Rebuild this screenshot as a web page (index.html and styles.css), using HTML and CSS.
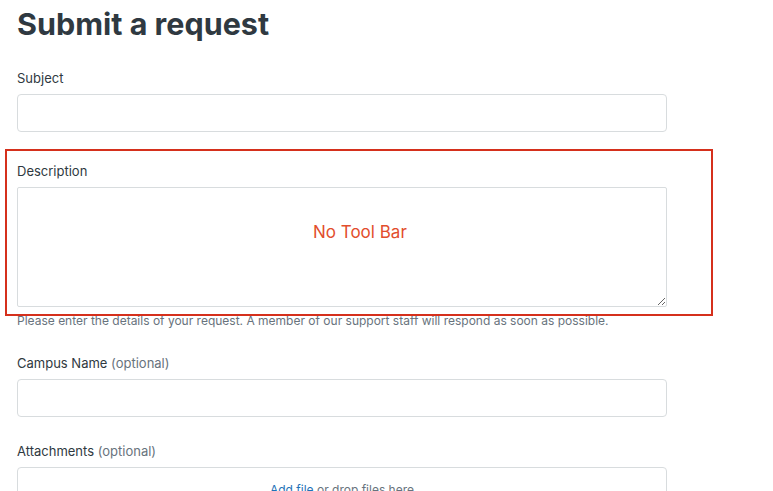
FILE: index.html
```html
<!DOCTYPE html>
<html lang="en">
<head>
    <meta charset="UTF-8">
    <meta name="viewport" content="width=device-width, initial-scale=1.0">
    <title>Submit a request</title>
    <link rel="stylesheet" href="styles.css">
</head>
<body>
    <div class="page">
        <h1>Submit a request</h1>

        <form class="request-form">
            <div class="field">
                <label for="subject">Subject</label>
                <input type="text" id="subject">
            </div>

            <div class="field field-description">
                <label for="description">Description</label>
                <textarea id="description"></textarea>
                <span class="note-text">No Tool Bar</span>
                <span class="note-frame"></span>
                <p class="hint">Please enter the details of your request. A member of our support staff will respond as soon as possible.</p>
            </div>

            <div class="field field-campus">
                <label for="campus">Campus Name <span class="optional">(optional)</span></label>
                <input type="text" id="campus">
            </div>

            <div class="field field-attach">
                <label>Attachments <span class="optional">(optional)</span></label>
                <div class="dropzone">
                    <a href="#">Add file</a> or drop files here
                </div>
            </div>
        </form>
    </div>
</body>
</html>
```

FILE: styles.css
```css
body {
    margin: 0;
    font-family: Inter, "Liberation Sans", sans-serif;
    color: #2f3941;
    background: #fff;
}
.page {
    padding: 0 17px;
    width: 650px;
}
h1 {
    font-size: 30.5px;
    font-weight: 700;
    line-height: 36px;
    margin: 6px 0 0;
}
.field {
    margin-top: 26px;
}
.field-description {
    position: relative;
    margin-top: 29px;
}
.field-campus {
    margin-top: 24px;
}
.field-attach {
    margin-top: 24px;
}
label {
    display: block;
    font-size: 13px;
    line-height: 20px;
    margin-bottom: 6px;
}
.optional {
    color: #68737d;
}
input {
    display: block;
    box-sizing: border-box;
    width: 100%;
    height: 38px;
    border: 1px solid #d8dcde;
    border-radius: 4px;
    padding: 0 10px;
    font: inherit;
}
textarea {
    display: block;
    box-sizing: border-box;
    width: 100%;
    height: 120px;
    border: 1px solid #d8dcde;
    border-radius: 2px;
    padding: 8px 10px;
    font: inherit;
    resize: vertical;
}
.hint {
    font-size: 12px;
    line-height: 16px;
    color: #68737d;
    margin: 6px 0 0;
}
.note-text {
    position: absolute;
    left: 296px;
    top: 61px;
    font-size: 17px;
    color: #e24e2d;
    pointer-events: none;
}
.note-frame {
    position: absolute;
    left: -12px;
    top: -12px;
    width: 704px;
    height: 163px;
    border: 2px solid #d5301c;
    pointer-events: none;
}
.dropzone {
    box-sizing: border-box;
    border: 1px solid #d8dcde;
    border-radius: 4px;
    padding: 14px 10px;
    height: 70px;
    text-align: center;
    font-size: 12px;
    color: #68737d;
}
.dropzone a {
    color: #1f73b7;
    text-decoration: none;
}
```
